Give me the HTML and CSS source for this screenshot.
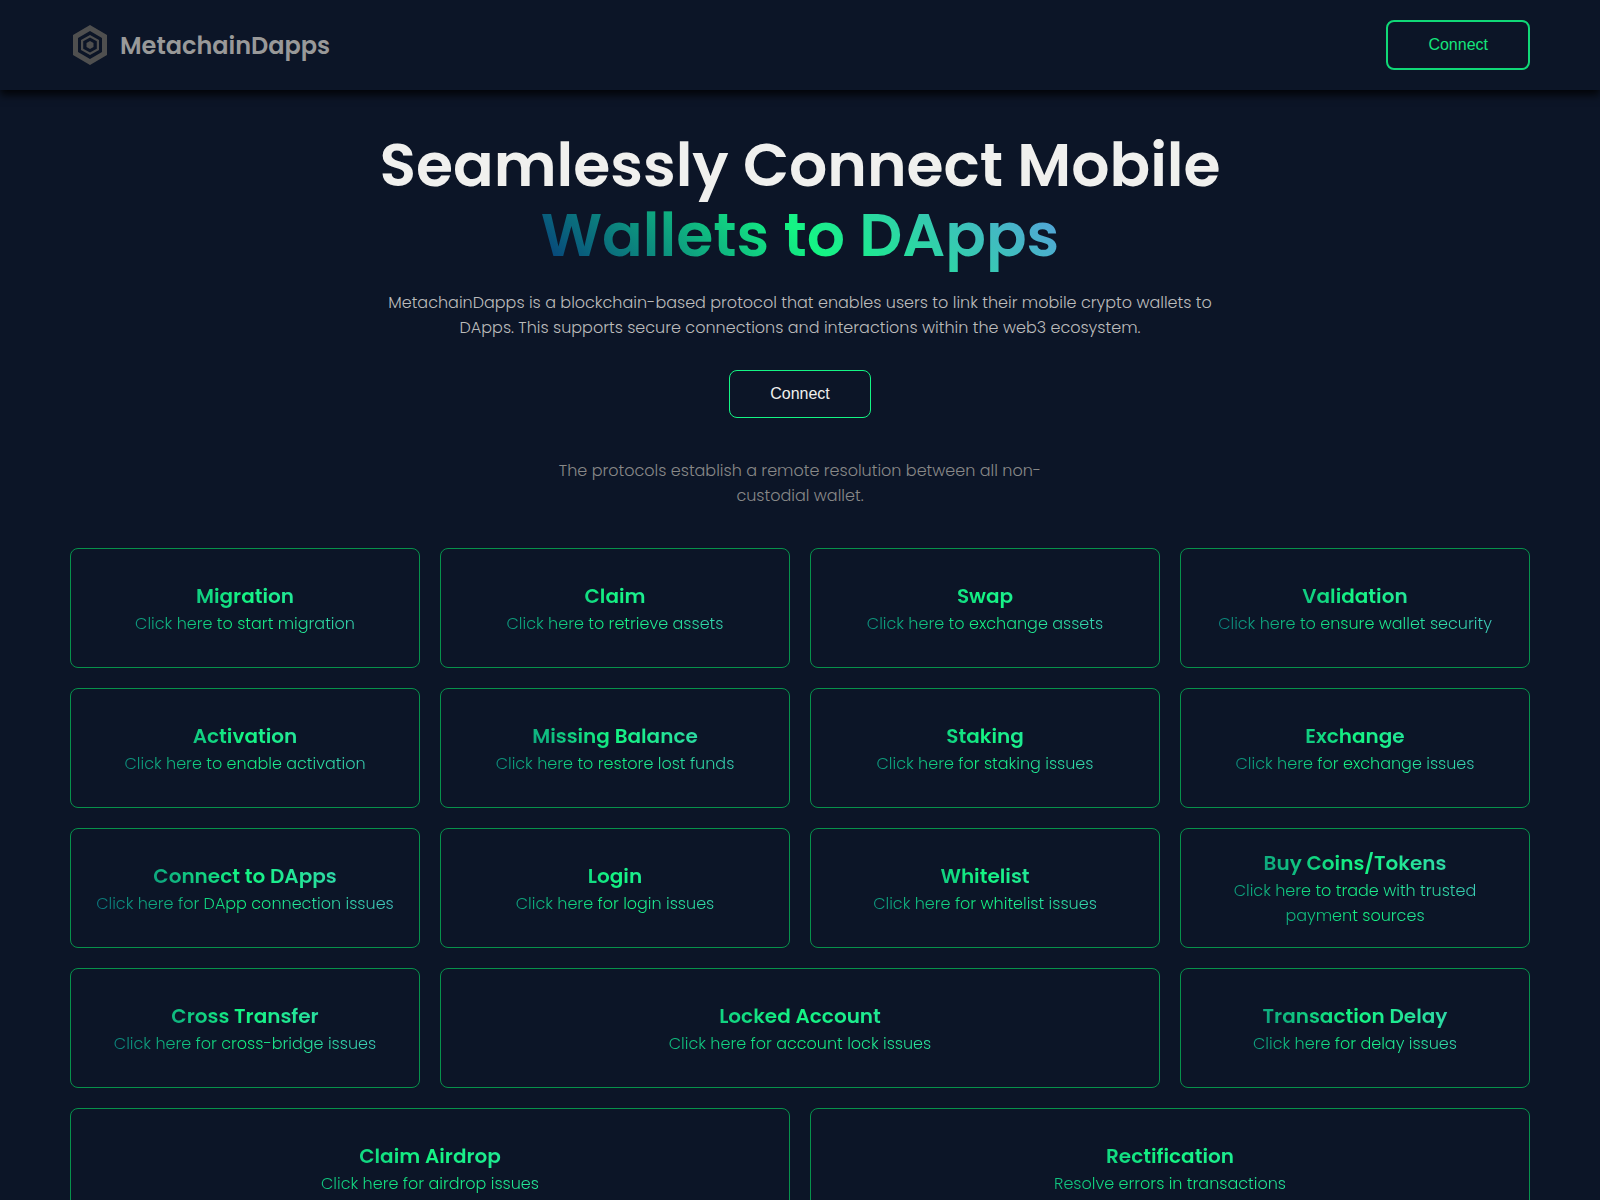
FILE: index.html
```html
<!DOCTYPE html>
<html lang="en">
<head>
    <meta charset="UTF-8">
    <meta name="viewport" content="width=device-width, initial-scale=1.0">
    <title>MetachainDapps</title>
    <link rel="stylesheet" href="styles.css">
</head>
<body>
    <header class="header">
        <a href="#" class="logo">
            <svg class="logo-icon" viewBox="0 0 40 40" aria-hidden="true">
                <path fill="#4f4f4f" fill-rule="evenodd" d="M20 0L37 10V30L20 40L3 30V10ZM20 6L8 13V27L20 34L32 27V13Z"/>
                <path fill="#4f4f4f" fill-rule="evenodd" d="M20 10L29 15V25L20 30L11 25V15ZM20 12.5L13.2 16.2V23.8L20 27.5L26.8 23.8V16.2Z"/>
                <path fill="#4f4f4f" d="M20 16L23.5 18V22L20 24L16.5 22V18Z"/>
            </svg>
            <span class="logo-text">MetachainDapps</span>
        </a>
        <button class="btn btn-header">Connect</button>
    </header>

    <main>
        <section class="hero">
            <h1>Seamlessly Connect Mobile <span class="gradient">Wallets to DApps</span></h1>
            <p class="hero-text">MetachainDapps is a blockchain-based protocol that enables users to link their mobile crypto wallets to DApps. This supports secure connections and interactions within the web3 ecosystem.</p>
            <button class="btn">Connect</button>
            <p class="note">The protocols establish a remote resolution between all non-custodial wallet.</p>
        </section>

        <section class="cards">
            <a href="#" class="card">
                <h3 class="gradient">Migration</h3>
                <p class="gradient">Click here to start migration</p>
            </a>
            <a href="#" class="card">
                <h3 class="gradient">Claim</h3>
                <p class="gradient">Click here to retrieve assets</p>
            </a>
            <a href="#" class="card">
                <h3 class="gradient">Swap</h3>
                <p class="gradient">Click here to exchange assets</p>
            </a>
            <a href="#" class="card">
                <h3 class="gradient">Validation</h3>
                <p class="gradient">Click here to ensure wallet security</p>
            </a>
            <a href="#" class="card">
                <h3 class="gradient">Activation</h3>
                <p class="gradient">Click here to enable activation</p>
            </a>
            <a href="#" class="card">
                <h3 class="gradient">Missing Balance</h3>
                <p class="gradient">Click here to restore lost funds</p>
            </a>
            <a href="#" class="card">
                <h3 class="gradient">Staking</h3>
                <p class="gradient">Click here for staking issues</p>
            </a>
            <a href="#" class="card">
                <h3 class="gradient">Exchange</h3>
                <p class="gradient">Click here for exchange issues</p>
            </a>
            <a href="#" class="card">
                <h3 class="gradient">Connect to DApps</h3>
                <p class="gradient">Click here for DApp connection issues</p>
            </a>
            <a href="#" class="card">
                <h3 class="gradient">Login</h3>
                <p class="gradient">Click here for login issues</p>
            </a>
            <a href="#" class="card">
                <h3 class="gradient">Whitelist</h3>
                <p class="gradient">Click here for whitelist issues</p>
            </a>
            <a href="#" class="card">
                <h3 class="gradient">Buy Coins/Tokens</h3>
                <p class="gradient">Click here to trade with trusted payment sources</p>
            </a>
            <a href="#" class="card">
                <h3 class="gradient">Cross Transfer</h3>
                <p class="gradient">Click here for cross-bridge issues</p>
            </a>
            <a href="#" class="card wide">
                <h3 class="gradient">Locked Account</h3>
                <p class="gradient">Click here for account lock issues</p>
            </a>
            <a href="#" class="card">
                <h3 class="gradient">Transaction Delay</h3>
                <p class="gradient">Click here for delay issues</p>
            </a>
            <a href="#" class="card wide">
                <h3 class="gradient">Claim Airdrop</h3>
                <p class="gradient">Click here for airdrop issues</p>
            </a>
            <a href="#" class="card wide">
                <h3 class="gradient">Rectification</h3>
                <p class="gradient">Resolve errors in transactions</p>
            </a>
        </section>
    </main>
</body>
</html>
```
FILE: styles.css
```css
* {
    margin: 0;
    padding: 0;
    box-sizing: border-box;
}
body {
    background-color: #0c1527;
    color: #f0f0ee;
    font-family: Poppins, Inter, sans-serif;
    font-size: 16px;
    font-weight: 300;
    line-height: 25px;
}
a {
    color: inherit;
    text-decoration: none;
}
.header {
    display: flex;
    justify-content: space-between;
    align-items: center;
    padding: 20px 70px;
    box-shadow: 0 5px 8px rgba(0, 0, 0, 0.8);
}
.logo {
    display: flex;
    align-items: center;
    gap: 10px;
}
.logo-icon {
    width: 40px;
    height: 40px;
}
.logo-text {
    color: #999;
    font-size: 24px;
    font-weight: 600;
}
.btn {
    height: 48px;
    padding: 0 40px;
    background-color: transparent;
    border: 1px solid #14f584;
    border-radius: 8px;
    color: #f0f0ee;
    font-family: "Liberation Sans", Arial, sans-serif;
    font-size: 16px;
    cursor: pointer;
}
.btn-header {
    height: 50px;
    border: 2px solid #10d877;
    color: #14e57c;
}
.gradient {
    background: linear-gradient(45deg, #06347a, #14f583 50%, #5a9ce2);
    -webkit-background-clip: text;
    background-clip: text;
    color: transparent;
}
.hero {
    display: flex;
    flex-direction: column;
    align-items: center;
    padding: 40px 20px;
    text-align: center;
}
h1 {
    max-width: 900px;
    font-size: 60px;
    font-weight: 600;
    line-height: 70px;
}
.hero-text {
    max-width: 860px;
    margin: 20px 0 30px;
    color: #bbb;
}
.note {
    max-width: 500px;
    margin-top: 40px;
    color: #888;
}
.cards {
    display: grid;
    grid-template-columns: repeat(4, 1fr);
    gap: 20px;
    padding: 0 70px 40px;
}
.card {
    display: flex;
    flex-direction: column;
    justify-content: center;
    min-height: 120px;
    padding: 10px 0;
    border: 1px solid #07914b;
    border-radius: 8px;
    text-align: center;
}
.card .gradient {
    padding: 0 20px;
    background-image: linear-gradient(45deg, #08557a, #14f583 50%, #4cb8cc);
}
.card h3 {
    font-size: 20px;
    font-weight: 600;
    line-height: 30px;
}
.wide {
    grid-column: span 2;
}
```
